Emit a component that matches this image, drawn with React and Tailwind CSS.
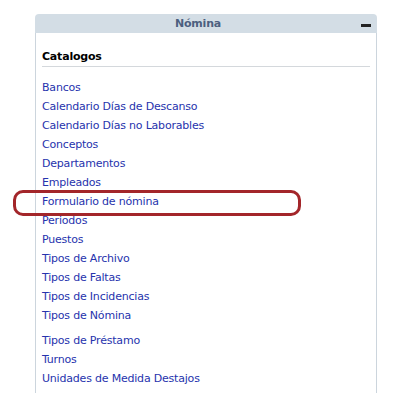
const groupA = [
  'Bancos',
  'Calendario Días de Descanso',
  'Calendario Días no Laborables',
  'Conceptos',
  'Departamentos',
  'Empleados',
  'Formulario de nómina',
  'Periodos',
  'Puestos',
  'Tipos de Archivo',
  'Tipos de Faltas',
  'Tipos de Incidencias',
  'Tipos de Nómina',
]

const groupB = ['Tipos de Préstamo', 'Turnos', 'Unidades de Medida Destajos']

function LinkItem({ label }) {
  return (
    <li>
      <a href="#" className="block h-[19px] leading-[19px] text-[#2633ad] no-underline">
        {label}
      </a>
    </li>
  )
}

export default function App() {
  return (
    <div
      className="relative min-h-[403px] bg-white pt-[14px] pl-[35px] text-[11px] tracking-[-0.2px]"
      style={{ fontFamily: '"DejaVu Sans", Verdana, sans-serif' }}
    >
      <div className="w-[342px]">
        <div className="relative flex h-[19px] items-center justify-center rounded-t-[4px] bg-[#d3dde5] pr-4">
          <span className="mt-[2px] font-bold text-[#4c5f7f]">Nómina</span>
          <span className="absolute right-[6px] top-[10px] h-[3px] w-[10px] bg-[#222]" />
        </div>
        <div className="h-[360px] border-x border-[#ccd5dd] px-[6px] pt-[14px]">
          <h3 className="h-[20px] border-b border-[#d4d8dc] font-bold leading-[19px] text-black">
            Catalogos
          </h3>
          <ul className="mt-[11px]">
            {groupA.map((item) => (
              <LinkItem key={item} label={item} />
            ))}
          </ul>
          <ul className="mt-[6px]">
            {groupB.map((item) => (
              <LinkItem key={item} label={item} />
            ))}
          </ul>
        </div>
      </div>

      {/* red annotation around the highlighted link */}
      <div className="pointer-events-none absolute left-[13px] top-[190px] h-[26px] w-[288px] rounded-[10px] border-[3px] border-[#a3262a]" />
    </div>
  )
}
